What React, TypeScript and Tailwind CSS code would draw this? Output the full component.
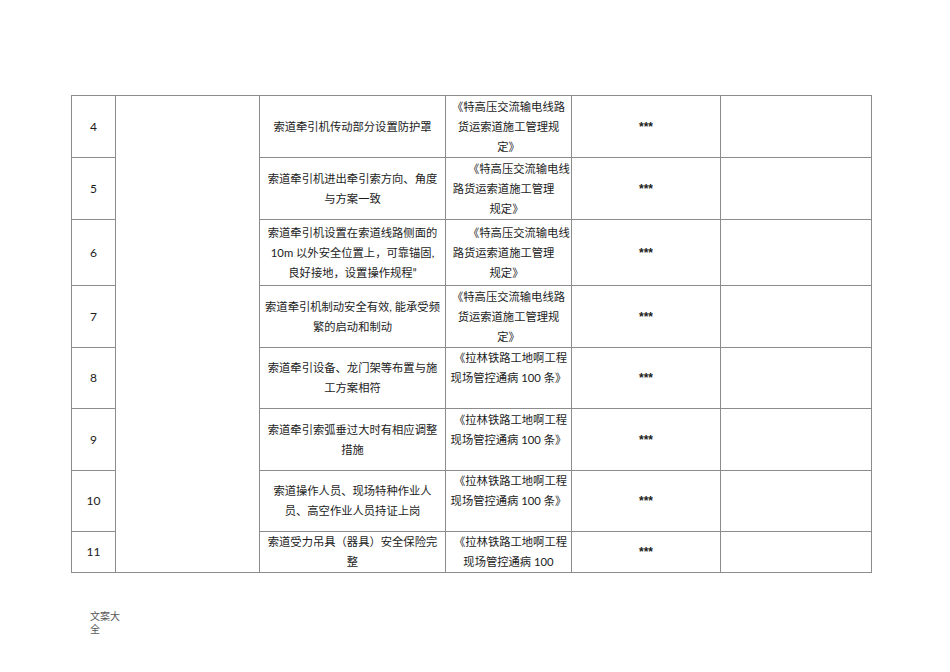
type Line = { t: string; c?: string };

type Row = {
  n: string;
  h: string;
  top: string;
  desc: string[];
  ref: Line[];
};

const spec: Line[] = [
  { t: '《特高压交流输电线路' },
  { t: '货运索道施工管理规' },
  { t: '定》' },
];

const specB: Line[] = [
  { t: '《特高压交流输电线', c: 'pl-[18px]' },
  { t: '路货运索道施工管理', c: 'pr-[10px]' },
  { t: '规定》', c: 'pr-[4px]' },
];

const lalin: Line[] = [
  { t: '《拉林铁路工地啊工程', c: 'pl-[4px]' },
  { t: '现场管控通病 100 条》' },
  { t: '\u00a0' },
];

const rows: Row[] = [
  { n: '4', h: 'h-[62px]', top: 'border-t-[#8c8c8c]', desc: ['索道牵引机传动部分设置防护罩'], ref: spec },
  { n: '5', h: 'h-[62px]', top: 'border-t-[#c9c9c9]', desc: ['索道牵引机进出牵引索方向、角度', '与方案一致'], ref: specB },
  {
    n: '6',
    h: 'h-[66px]',
    top: 'border-t-[#8c8c8c]',
    desc: ['索道牵引机设置在索道线路侧面的', '10m 以外安全位置上，可靠锚固,', '良好接地，设置操作规程”'],
    ref: specB,
  },
  { n: '7', h: 'h-[62px]', top: 'border-t-[#8c8c8c]', desc: ['索道牵引机制动安全有效, 能承受频', '繁的启动和制动'], ref: spec },
  { n: '8', h: 'h-[61px]', top: 'border-t-[#8c8c8c]', desc: ['索道牵引设备、龙门架等布置与施', '工方案相符'], ref: lalin },
  { n: '9', h: 'h-[62px]', top: 'border-t-[#8c8c8c]', desc: ['索道牵引索弧垂过大时有相应调整', '措施'], ref: lalin },
  { n: '10', h: 'h-[61px]', top: 'border-t-[#c9c9c9]', desc: ['索道操作人员、现场特种作业人', '员、高空作业人员持证上岗'], ref: lalin },
  {
    n: '11',
    h: 'h-[41px]',
    top: 'border-t-[#8c8c8c]',
    desc: ['索道受力吊具（器具）安全保险完', '整'],
    ref: [{ t: '《拉林铁路工地啊工程', c: 'pl-[4px]' }, { t: '现场管控通病 100' }],
  },
];

function Lines({ lines }: { lines: Line[] }) {
  return (
    <div className="leading-[20px]">
      {lines.map((l, i) => (
        <div key={i} className={`text-center whitespace-nowrap ${l.c ?? ''}`}>
          {l.t}
        </div>
      ))}
    </div>
  );
}

export default function App() {
  return (
    <div className="w-[950px] h-[672px] bg-white pt-[95px] pl-[71px] text-[#1c1c1c] font-['Lato','Noto_Sans_CJK_SC',sans-serif] text-[11.3px]">
      <table className="table-fixed border-collapse w-[800px]">
        <colgroup>
          <col className="w-[44px]" />
          <col className="w-[144px]" />
          <col className="w-[186px]" />
          <col className="w-[126px]" />
          <col className="w-[149px]" />
          <col className="w-[151px]" />
        </colgroup>
        <tbody>
          {rows.map((r, i) => (
            <tr key={r.n} className={r.h}>
              <td className={`border border-[#8c8c8c] ${r.top} p-0 text-center align-middle text-[12px]`}>{r.n}</td>
              {i === 0 && <td rowSpan={rows.length} className="border border-[#8c8c8c] p-0" />}
              <td className={`border border-[#8c8c8c] ${r.top} px-[4px] py-0 align-middle`}>
                <Lines lines={r.desc.map((t) => ({ t }))} />
              </td>
              <td className={`border border-[#8c8c8c] ${r.top} px-[4px] py-0 align-middle`}>
                <Lines lines={r.ref} />
              </td>
              <td className={`border border-[#8c8c8c] ${r.top} p-0 text-center align-middle font-bold text-[12px] font-['Liberation_Sans',sans-serif]`}>***</td>
              <td className={`border border-[#8c8c8c] ${r.top} p-0`} />
            </tr>
          ))}
        </tbody>
      </table>
      <div className="mt-[37px] ml-[19px] w-[31px] text-[10px] leading-[13px] text-[#555]">文案大全</div>
    </div>
  );
}
